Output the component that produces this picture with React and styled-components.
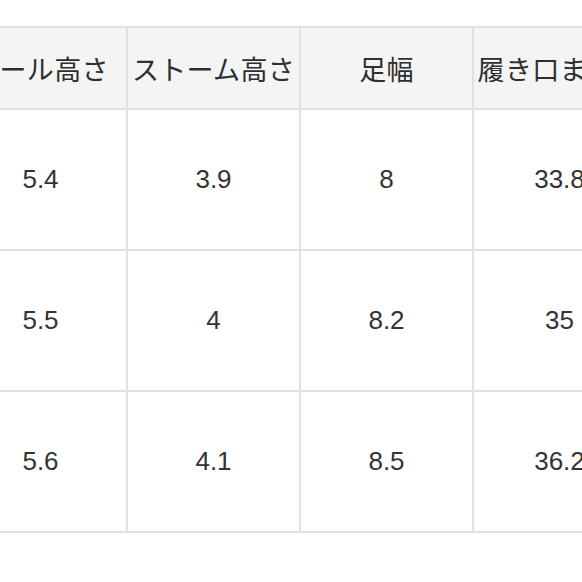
import React from "react";
import styled, { createGlobalStyle } from "styled-components";

const GlobalStyle = createGlobalStyle`
  html, body {
    margin: 0;
    padding: 0;
    background: #ffffff;
  }
  body {
    font-family: "Noto Sans CJK JP", "Noto Sans", sans-serif;
    color: #333333;
  }
`;

const Page = styled.div`
  width: 582px;
  height: 582px;
  overflow: hidden;
  padding-top: 26px;
  box-sizing: border-box;
`;

const Table = styled.table`
  border-collapse: collapse;
  table-layout: fixed;
  margin-left: -47px;
  width: 865px;
`;

const Col = styled.col`
  width: 173px;
`;

const HeadCell = styled.th`
  height: 80px;
  padding: 0;
  background: #f4f4f4;
  border: 2.5px solid #e1e1e1;
  font-size: 27px;
  font-weight: 400;
  text-align: center;
  white-space: nowrap;
  overflow: hidden;
  letter-spacing: 0.3px;
  color: #2e2e2e;
`;

const Cell = styled.td`
  height: 139px;
  padding: 0;
  background: #ffffff;
  border: 2.5px solid #e1e1e1;
  font-size: 26px;
  text-align: center;
  white-space: nowrap;
  font-family: "Liberation Sans", "Noto Sans CJK JP", sans-serif;
  color: #333333;
`;

const headers = ["ヒール高さ", "ストーム高さ", "足幅", "履き口まわり", "筒丈"];

const rows = [
  ["5.4", "3.9", "8", "33.8", "20"],
  ["5.5", "4", "8.2", "35", "20.5"],
  ["5.6", "4.1", "8.5", "36.2", "21"],
];

export default function App() {
  return (
    <>
      <GlobalStyle />
      <Page>
        <Table>
          <colgroup>
            {headers.map((h) => (
              <Col key={h} />
            ))}
          </colgroup>
          <thead>
            <tr>
              {headers.map((h) => (
                <HeadCell key={h}>{h}</HeadCell>
              ))}
            </tr>
          </thead>
          <tbody>
            {rows.map((r, i) => (
              <tr key={i}>
                {r.map((v, j) => (
                  <Cell key={j}>{v}</Cell>
                ))}
              </tr>
            ))}
          </tbody>
        </Table>
      </Page>
    </>
  );
}
